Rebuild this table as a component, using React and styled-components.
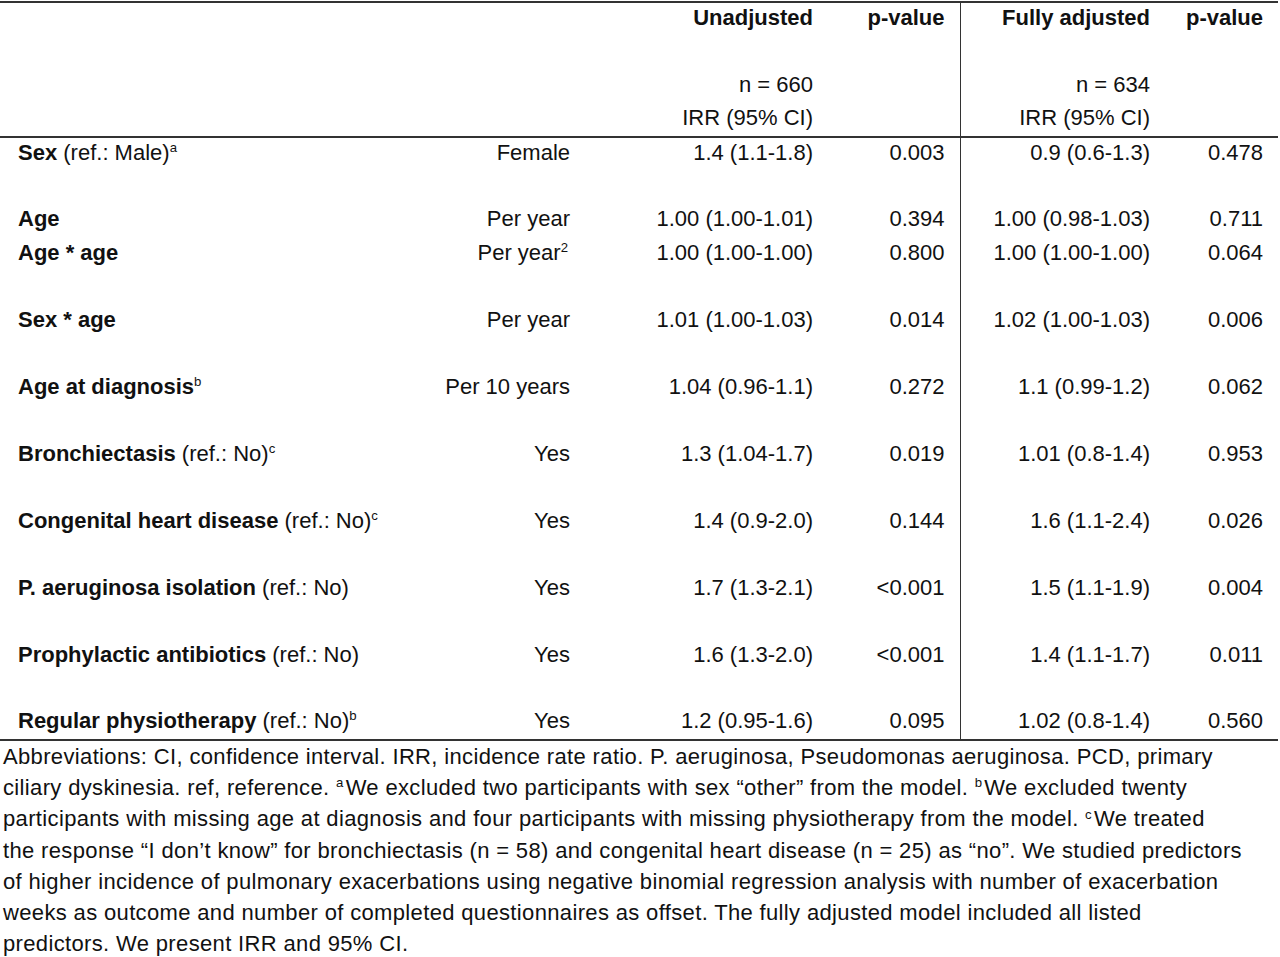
import React from "react";
import styled, { createGlobalStyle } from "styled-components";

const GlobalStyle = createGlobalStyle`
  body {
    margin: 0;
    background: #fff;
    color: #111;
    font-family: "Liberation Sans", Arial, sans-serif;
  }
`;

const rows = [
  { label: "Sex", note: " (ref.: Male)", sup: "a", level: "Female", irr1: "1.4 (1.1-1.8)", p1: "0.003", irr2: "0.9 (0.6-1.3)", p2: "0.478" },
  null,
  { label: "Age", level: "Per year", irr1: "1.00 (1.00-1.01)", p1: "0.394", irr2: "1.00 (0.98-1.03)", p2: "0.711" },
  { label: "Age * age", level: "Per year", levelSup: "2", irr1: "1.00 (1.00-1.00)", p1: "0.800", irr2: "1.00 (1.00-1.00)", p2: "0.064" },
  null,
  { label: "Sex * age", level: "Per year", irr1: "1.01 (1.00-1.03)", p1: "0.014", irr2: "1.02 (1.00-1.03)", p2: "0.006" },
  null,
  { label: "Age at diagnosis", sup: "b", level: "Per 10 years", irr1: "1.04 (0.96-1.1)", p1: "0.272", irr2: "1.1 (0.99-1.2)", p2: "0.062" },
  null,
  { label: "Bronchiectasis", note: " (ref.: No)", sup: "c", level: "Yes", irr1: "1.3 (1.04-1.7)", p1: "0.019", irr2: "1.01 (0.8-1.4)", p2: "0.953" },
  null,
  { label: "Congenital heart disease", note: " (ref.: No)", sup: "c", level: "Yes", irr1: "1.4 (0.9-2.0)", p1: "0.144", irr2: "1.6 (1.1-2.4)", p2: "0.026" },
  null,
  { label: "P. aeruginosa isolation", note: " (ref.: No)", level: "Yes", irr1: "1.7 (1.3-2.1)", p1: "<0.001", irr2: "1.5 (1.1-1.9)", p2: "0.004" },
  null,
  { label: "Prophylactic antibiotics", note: " (ref.: No)", level: "Yes", irr1: "1.6 (1.3-2.0)", p1: "<0.001", irr2: "1.4 (1.1-1.7)", p2: "0.011" },
  null,
  { label: "Regular physiotherapy", note: " (ref.: No)", sup: "b", level: "Yes", irr1: "1.2 (0.95-1.6)", p1: "0.095", irr2: "1.02 (0.8-1.4)", p2: "0.560" },
];

export default function App() {
  return (
    <>
      <GlobalStyle />
      <Page>
        <Table>
          <colgroup>
            <col style={{ width: 390 }} />
            <col style={{ width: 195 }} />
            <col style={{ width: 243 }} />
            <col style={{ width: 132 }} />
            <col style={{ width: 205 }} />
            <col style={{ width: 113 }} />
          </colgroup>
          <thead>
            <HeadRow>
              <Cell />
              <Cell />
              <Cell $bold>Unadjusted</Cell>
              <Cell $bold>p-value</Cell>
              <Cell $bold $divider>Fully adjusted</Cell>
              <Cell $bold>p-value</Cell>
            </HeadRow>
            <HeadRow>
              <Cell />
              <Cell />
              <Cell />
              <Cell />
              <Cell $divider />
              <Cell />
            </HeadRow>
            <HeadRow>
              <Cell />
              <Cell />
              <Cell>n = 660</Cell>
              <Cell />
              <Cell $divider>n = 634</Cell>
              <Cell />
            </HeadRow>
            <HeadRow $last>
              <Cell />
              <Cell />
              <Cell>IRR (95% CI)</Cell>
              <Cell />
              <Cell $divider>IRR (95% CI)</Cell>
              <Cell />
            </HeadRow>
          </thead>
          <tbody>
            {rows.map((r, i) =>
              r ? (
                <BodyRow key={i}>
                  <LabelCell>
                    <b>{r.label}</b>
                    {r.note}
                    {r.sup && <Sup>{r.sup}</Sup>}
                  </LabelCell>
                  <Cell>
                    {r.level}
                    {r.levelSup && <Sup>{r.levelSup}</Sup>}
                  </Cell>
                  <Cell>{r.irr1}</Cell>
                  <Cell>{r.p1}</Cell>
                  <Cell $divider>{r.irr2}</Cell>
                  <Cell>{r.p2}</Cell>
                </BodyRow>
              ) : (
                <BodyRow key={i}>
                  <LabelCell />
                  <Cell />
                  <Cell />
                  <Cell />
                  <Cell $divider />
                  <Cell />
                </BodyRow>
              )
            )}
          </tbody>
        </Table>
        <Footnote>
          Abbreviations: CI, confidence interval. IRR, incidence rate ratio. P.
          aeruginosa, Pseudomonas aeruginosa. PCD, primary
          <br />
          ciliary dyskinesia. ref, reference. <Sup>a</Sup>We excluded two
          participants with sex “other” from the model. <Sup>b</Sup>We excluded
          twenty
          <br />
          participants with missing age at diagnosis and four participants with
          missing physiotherapy from the model. <Sup>c</Sup>We treated
          <br />
          the response “I don’t know” for bronchiectasis (n = 58) and congenital
          heart disease (n = 25) as “no”. We studied predictors
          <br />
          of higher incidence of pulmonary exacerbations using negative binomial
          regression analysis with number of exacerbation
          <br />
          weeks as outcome and number of completed questionnaires as offset. The
          fully adjusted model included all listed
          <br />
          predictors. We present IRR and 95% CI.
        </Footnote>
      </Page>
    </>
  );
}

const Page = styled.div`
  width: 1280px;
  padding-top: 1px;
`;

const Table = styled.table`
  width: 1278px;
  border-collapse: collapse;
  table-layout: fixed;
  font-size: 22px;
  border-top: 2px solid #333;
  border-bottom: 2px solid #333;
`;

const HeadRow = styled.tr`
  height: 33.75px;
  border-bottom: ${(p) => (p.$last ? "2px solid #333" : "none")};
`;

const BodyRow = styled.tr`
  height: 33.5px;
`;

const Cell = styled.td`
  padding: 0 15px 3px 0;
  text-align: right;
  white-space: nowrap;
  line-height: 24px;
  font-weight: ${(p) => (p.$bold ? 700 : 400)};
  border-left: ${(p) => (p.$divider ? "1.5px solid #333" : "none")};
`;

const LabelCell = styled.td`
  padding: 0 0 3px 18px;
  text-align: left;
  white-space: nowrap;
  line-height: 24px;

  b {
    font-weight: 700;
  }
`;

const Sup = styled.sup`
  font-size: 0.6em;
  line-height: 0;
  vertical-align: 0.6em;
  margin-right: 2px;
`;

const Footnote = styled.p`
  margin: 0;
  padding: 0 0 0 3px;
  font-size: 22px;
  letter-spacing: 0.35px;
  line-height: 31.2px;
  white-space: nowrap;
  color: #111;
`;
